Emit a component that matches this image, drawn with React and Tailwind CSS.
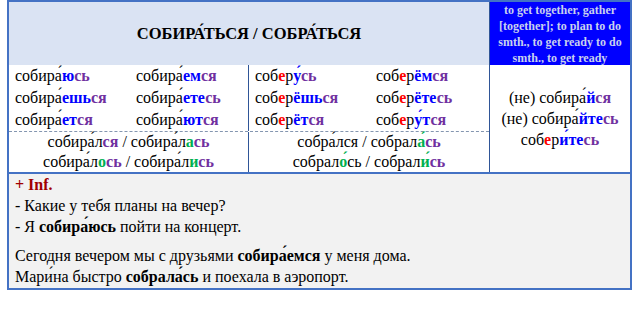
import React from "react";

const colors = {
  b: "font-bold text-[#0000ff]",
  p: "font-bold text-[#7030a0]",
  r: "font-bold text-[#ff0000]",
  g: "font-bold text-[#00b050]",
  k: "font-bold",
};

function Word({ parts }) {
  return (
    <span>
      {parts.map((part, i) =>
        typeof part === "string" ? (
          <span key={i}>{part}</span>
        ) : (
          <span key={i} className={colors[part[1]]}>
            {part[0]}
          </span>
        )
      )}
    </span>
  );
}

const A = "\u0301";

const imperfective = [
  [["собира" + A, ["ю", "b"], ["сь", "p"]], ["собира" + A, ["ем", "b"], ["ся", "p"]]],
  [["собира" + A, ["ешь", "b"], ["ся", "p"]], ["собира" + A, ["ете", "b"], ["сь", "p"]]],
  [["собира" + A, ["ет", "b"], ["ся", "p"]], ["собира" + A, ["ют", "b"], ["ся", "p"]]],
];

const perfective = [
  [["соб", ["е", "r"], "р", ["у" + A, "b"], ["сь", "p"]], ["соб", ["е", "r"], "р", ["ём", "b"], ["ся", "p"]]],
  [["соб", ["е", "r"], "р", ["ёшь", "b"], ["ся", "p"]], ["соб", ["е", "r"], "р", ["ёте", "b"], ["сь", "p"]]],
  [["соб", ["е", "r"], "р", ["ёт", "b"], ["ся", "p"]], ["соб", ["е", "r"], "р", ["у" + A + "т", "b"], ["ся", "p"]]],
];

function ConjGrid({ rows }) {
  return (
    <div className="grid grid-cols-[121px_1fr] px-[6px] leading-[22px]">
      {rows.map((row, i) =>
        row.map((parts, j) => (
          <div key={i + "-" + j}>
            <Word parts={parts} />
          </div>
        ))
      )}
    </div>
  );
}

export default function App() {
  return (
    <div className="w-[633px] h-[309px] bg-white pl-[7px] text-black text-[16px] font-['Liberation_Serif','Times_New_Roman',serif]">
      <div className="w-[625px] border-2 border-[#4472c4]">

        {/* header */}
        <div className="flex h-[63px]">
          <div className="flex-1 bg-[#dae3f3] flex items-center justify-center font-bold text-[16.5px] pt-[2px]">
            СОБИРА{A}ТЬСЯ / СОБРА{A}ТЬСЯ
          </div>
          <div className="w-[141px] bg-[#0000ff] border-l border-[#2f5597] text-[#c9d1ee] font-bold text-[12px] leading-[16px] text-center px-[4px] flex items-center justify-center">
            to get together, gather [together]; to plan to do smth., to get ready to do smth., to get ready
          </div>
        </div>

        {/* forms */}
        <div className="flex">
          <div className="flex-1">
            <div className="flex">
              <div className="w-[240px] border-r border-[#2f5597]">
                <ConjGrid rows={imperfective} />
              </div>
              <div className="flex-1">
                <ConjGrid rows={perfective} />
              </div>
            </div>
            <div className="flex border-t border-dashed border-[#8496b0] leading-[20px] text-center">
              <div className="w-[240px] border-r border-[#2f5597]">
                <div>
                  <Word parts={["собира" + A + "л", ["ся", "p"]]} /> / <Word parts={["собира" + A + "л", ["а", "g"], ["сь", "p"]]} />
                </div>
                <div>
                  <Word parts={["собира" + A + "л", ["о", "g"], ["сь", "p"]]} /> / <Word parts={["собира" + A + "л", ["и", "g"], ["сь", "p"]]} />
                </div>
              </div>
              <div className="flex-1">
                <div>
                  собра{A}лся / <Word parts={["собрал", ["а" + A, "g"], ["сь", "p"]]} />
                </div>
                <div>
                  <Word parts={["собрал", ["о" + A, "g"], "сь"]} /> / <Word parts={["собрал", ["и" + A, "g"], ["сь", "p"]]} />
                </div>
              </div>
            </div>
          </div>
          <div className="w-[141px] border-l border-[#2f5597] flex flex-col items-center justify-center leading-[21px] text-center">
            <div>
              (не) <Word parts={["собира" + A, ["й", "b"], ["ся", "p"]]} />
            </div>
            <div>
              (не) <Word parts={["собира" + A, ["йте", "b"], ["сь", "p"]]} />
            </div>
            <div>
              <Word parts={["соб", ["е", "r"], "р", ["и" + A + "те", "b"], ["сь", "p"]]} />
            </div>
          </div>
        </div>

        {/* examples */}
        <div className="border-t-2 border-[#4472c4] bg-[#f2f2f2] px-[6px] pb-[1px] leading-[21px]">
          <div className="font-bold text-[#a00000]">+ Inf.</div>
          <div>- Какие у тебя планы на вечер?</div>
          <div>
            - Я <span className="font-bold">собира{A}юсь</span> пойти на концерт.
          </div>
          <div className="mt-[8px]">
            Сегодня вечером мы с друзьями <span className="font-bold">собира{A}емся</span> у меня дома.
          </div>
          <div>
            Мари{A}на быстро <span className="font-bold">собрала{A}сь</span> и поехала в аэропорт.
          </div>
        </div>

      </div>
    </div>
  );
}
